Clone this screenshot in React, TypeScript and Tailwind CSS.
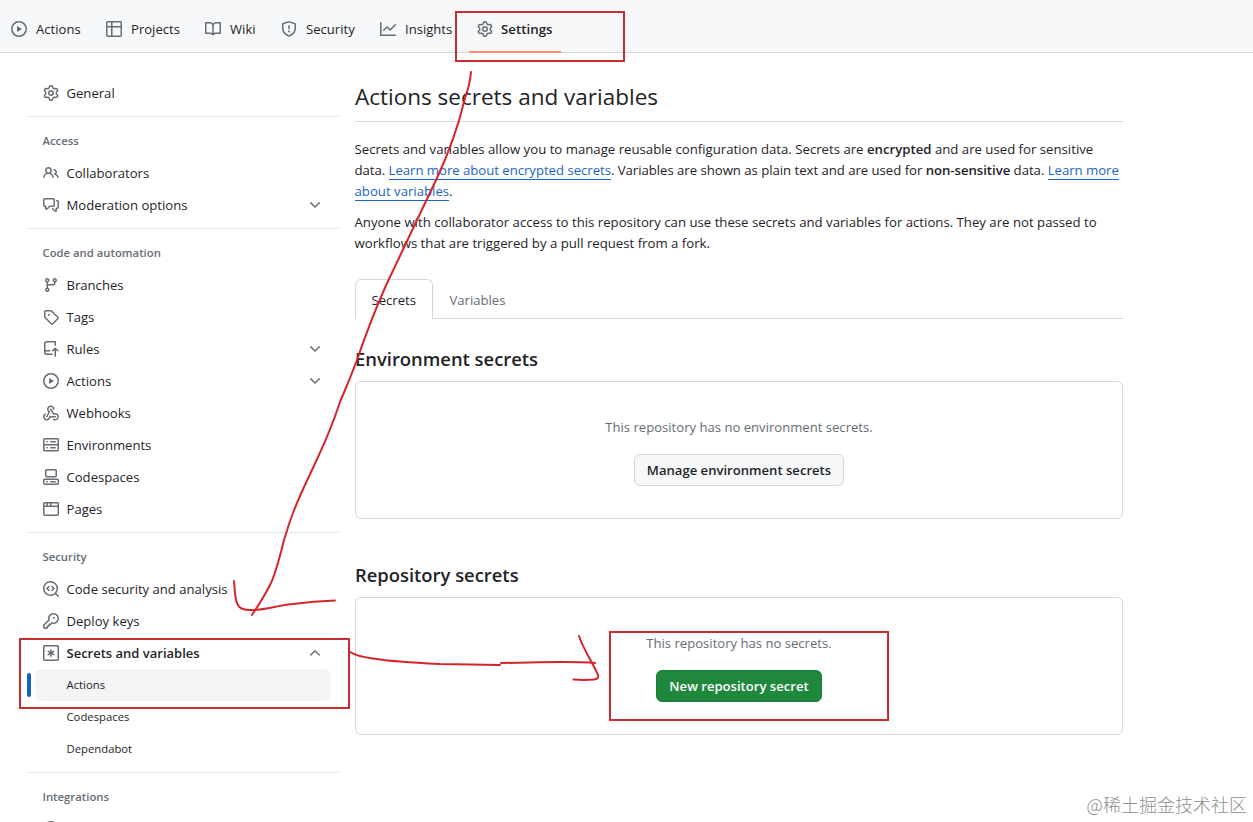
import type { ReactNode } from "react";

const icons = {
  play: "M8 0a8 8 0 1 1 0 16A8 8 0 0 1 8 0ZM1.5 8a6.5 6.5 0 1 0 13 0 6.5 6.5 0 0 0-13 0Zm4.879-2.773 4.264 2.559a.25.25 0 0 1 0 .428l-4.264 2.559A.25.25 0 0 1 6 10.559V5.442a.25.25 0 0 1 .379-.215Z",
  table: "M0 1.75C0 .784.784 0 1.75 0h12.5C15.216 0 16 .784 16 1.75v12.5A1.75 1.75 0 0 1 14.25 16H1.75A1.75 1.75 0 0 1 0 14.25ZM6.5 6.5v8h7.75a.25.25 0 0 0 .25-.25V6.5Zm8-1.5V1.75a.25.25 0 0 0-.25-.25H6.5V5Zm-13 1.5v7.75c0 .138.112.25.25.25H5v-8ZM5 5V1.5H1.75a.25.25 0 0 0-.25.25V5Z",
  book: "M0 1.75A.75.75 0 0 1 .75 1h4.253c1.227 0 2.317.59 3 1.501A3.743 3.743 0 0 1 11.006 1h4.245a.75.75 0 0 1 .75.75v10.5a.75.75 0 0 1-.75.75h-4.507a2.25 2.25 0 0 0-1.591.659l-.622.621a.75.75 0 0 1-1.06 0l-.622-.621A2.25 2.25 0 0 0 5.258 13H.75a.75.75 0 0 1-.75-.75Zm7.251 10.324.004-5.073-.002-2.253A2.25 2.25 0 0 0 5.003 2.5H1.5v9h3.757a3.75 3.75 0 0 1 1.994.574ZM8.755 4.75l-.004 7.322a3.752 3.752 0 0 1 1.992-.572H14.5v-9h-3.495a2.25 2.25 0 0 0-2.25 2.25Z",
  shield: "M7.467.133a1.748 1.748 0 0 1 1.066 0l5.25 1.68A1.75 1.75 0 0 1 15 3.48V7c0 1.566-.32 3.182-1.303 4.682-.983 1.498-2.585 2.813-5.032 3.855a1.697 1.697 0 0 1-1.33 0c-2.447-1.042-4.049-2.357-5.032-3.855C1.32 10.182 1 8.566 1 7V3.48a1.75 1.75 0 0 1 1.217-1.667Zm.61 1.429a.25.25 0 0 0-.153 0l-5.25 1.68a.25.25 0 0 0-.174.238V7c0 1.358.275 2.666 1.057 3.86.784 1.194 2.121 2.34 4.366 3.297a.196.196 0 0 0 .154 0c2.245-.956 3.582-2.104 4.366-3.298C13.225 9.666 13.5 8.36 13.5 7V3.48a.251.251 0 0 0-.174-.237l-5.25-1.68ZM8.75 4.75v3a.75.75 0 0 1-1.5 0v-3a.75.75 0 0 1 1.5 0ZM9 10.5a1 1 0 1 1-2 0 1 1 0 0 1 2 0Z",
  graph: "M1.5 1.75V13.5h13.75a.75.75 0 0 1 0 1.5H.75a.75.75 0 0 1-.75-.75V1.75a.75.75 0 0 1 1.5 0Zm14.28 2.53-5.25 5.25a.75.75 0 0 1-1.06 0L7 7.06 4.28 9.78a.751.751 0 0 1-1.042-.018.751.751 0 0 1-.018-1.042l3.25-3.25a.75.75 0 0 1 1.06 0L10 7.94l4.72-4.72a.751.751 0 0 1 1.042.018.751.751 0 0 1 .018 1.042Z",
  gear: "M8 0a8.2 8.2 0 0 1 .701.031C9.444.095 9.99.645 10.16 1.29l.288 1.107c.018.066.079.158.212.224.231.114.454.243.668.386.123.082.233.09.299.071l1.103-.303c.644-.176 1.392.021 1.82.63.27.385.506.792.704 1.218.315.675.111 1.422-.364 1.891l-.814.806c-.049.048-.098.147-.088.294.016.257.016.515 0 .772-.01.147.038.246.088.294l.814.806c.475.469.679 1.216.364 1.891a7.977 7.977 0 0 1-.704 1.217c-.428.61-1.176.807-1.82.63l-1.102-.302c-.067-.019-.177-.011-.3.071a5.909 5.909 0 0 1-.668.386c-.133.066-.194.158-.211.224l-.29 1.106c-.168.646-.715 1.196-1.458 1.26a8.006 8.006 0 0 1-1.402 0c-.743-.064-1.289-.614-1.458-1.26l-.289-1.106c-.018-.066-.079-.158-.212-.224a5.738 5.738 0 0 1-.668-.386c-.123-.082-.233-.09-.299-.071l-1.103.303c-.644.176-1.392-.021-1.82-.63a8.12 8.12 0 0 1-.704-1.218c-.315-.675-.111-1.422.363-1.891l.815-.806c.05-.048.098-.147.088-.294a6.214 6.214 0 0 1 0-.772c.01-.147-.038-.246-.088-.294l-.815-.806C.635 6.045.431 5.298.746 4.623a7.92 7.92 0 0 1 .704-1.217c.428-.61 1.176-.807 1.82-.63l1.102.302c.067.019.177.011.3-.071.214-.143.437-.272.668-.386.133-.066.194-.158.211-.224l.29-1.106C6.009.645 6.556.095 7.299.03 7.53.01 7.764 0 8 0Zm-.571 1.525c-.036.003-.108.036-.137.146l-.289 1.105c-.147.561-.549.967-.998 1.189-.173.086-.34.183-.5.29-.417.278-.97.423-1.529.27l-1.103-.303c-.109-.03-.175.016-.195.045-.22.312-.412.644-.573.99-.014.031-.021.11.059.19l.815.806c.411.406.562.957.53 1.456a4.709 4.709 0 0 0 0 .582c.032.499-.119 1.05-.53 1.456l-.815.806c-.081.08-.073.159-.059.19.162.346.353.677.573.989.02.03.085.076.195.046l1.102-.303c.56-.153 1.113-.008 1.53.27.161.107.328.204.501.29.447.222.85.629.997 1.189l.289 1.105c.029.109.101.143.137.146a6.6 6.6 0 0 0 1.142 0c.036-.003.108-.036.137-.146l.289-1.105c.147-.561.549-.967.998-1.189.173-.086.34-.183.5-.29.417-.278.97-.423 1.529-.27l1.103.303c.109.029.175-.016.195-.045.22-.313.411-.644.573-.99.014-.031.021-.11-.059-.19l-.815-.806c-.411-.406-.562-.957-.53-1.456a4.709 4.709 0 0 0 0-.582c-.032-.499.119-1.05.53-1.456l.815-.806c.081-.08.073-.159.059-.19a6.464 6.464 0 0 0-.573-.989c-.02-.03-.085-.076-.195-.046l-1.102.303c-.56.153-1.113.008-1.53-.27a4.44 4.44 0 0 0-.501-.29c-.447-.222-.85-.629-.997-1.189l-.289-1.105c-.029-.11-.101-.143-.137-.146a6.6 6.6 0 0 0-1.142 0ZM11 8a3 3 0 1 1-6 0 3 3 0 0 1 6 0ZM9.5 8a1.5 1.5 0 1 0-3.001.001A1.5 1.5 0 0 0 9.5 8Z",
  people: "M2 5.5a3.5 3.5 0 1 1 5.898 2.549 5.508 5.508 0 0 1 3.034 4.084.75.75 0 1 1-1.482.235 4 4 0 0 0-7.9 0 .75.75 0 0 1-1.482-.236A5.507 5.507 0 0 1 3.102 8.05 3.493 3.493 0 0 1 2 5.5ZM11 4a3.001 3.001 0 0 1 2.22 5.018 5.01 5.01 0 0 1 2.56 3.012.749.749 0 0 1-.885.954.752.752 0 0 1-.549-.514 3.507 3.507 0 0 0-2.522-2.372.75.75 0 0 1-.574-.73v-.352a.75.75 0 0 1 .416-.672A1.5 1.5 0 0 0 11 5.5.75.75 0 0 1 11 4Zm-5.5-.5a2 2 0 1 0-.001 3.999A2 2 0 0 0 5.5 3.5Z",
  discussion: "M1.75 1h8.5c.966 0 1.75.784 1.75 1.75v5.5A1.75 1.75 0 0 1 10.25 10H7.061l-2.574 2.573A1.458 1.458 0 0 1 2 11.543V10h-.25A1.75 1.75 0 0 1 0 8.25v-5.5C0 1.784.784 1 1.75 1ZM1.5 2.75v5.5c0 .138.112.25.25.25h1a.75.75 0 0 1 .75.75v2.19l2.72-2.72a.749.749 0 0 1 .53-.22h3.5a.25.25 0 0 0 .25-.25v-5.5a.25.25 0 0 0-.25-.25h-8.5a.25.25 0 0 0-.25.25Zm13 2a.25.25 0 0 0-.25-.25h-.5a.75.75 0 0 1 0-1.5h.5c.966 0 1.75.784 1.75 1.75v5.5A1.75 1.75 0 0 1 14.25 12H14v1.543a1.458 1.458 0 0 1-2.487 1.03L9.22 12.28a.749.749 0 0 1 .326-1.275.749.749 0 0 1 .734.215l2.22 2.22v-2.19a.75.75 0 0 1 .75-.75h1a.25.25 0 0 0 .25-.25Z",
  branch: "M9.5 3.25a2.25 2.25 0 1 1 3 2.122V6A2.5 2.5 0 0 1 10 8.5H6a1 1 0 0 0-1 1v1.128a2.251 2.251 0 1 1-1.5 0V5.372a2.25 2.25 0 1 1 1.5 0v1.836A2.493 2.493 0 0 1 6 7h4a1 1 0 0 0 1-1v-.628A2.25 2.25 0 0 1 9.5 3.25Zm-6 0a.75.75 0 1 0 1.5 0 .75.75 0 0 0-1.5 0Zm8.25-.75a.75.75 0 1 0 0 1.5.75.75 0 0 0 0-1.5ZM4.25 12a.75.75 0 1 0 0 1.5.75.75 0 0 0 0-1.5Z",
  tag: "M1 7.775V2.75C1 1.784 1.784 1 2.75 1h5.025c.464 0 .91.184 1.238.513l6.25 6.25a1.75 1.75 0 0 1 0 2.474l-5.026 5.026a1.75 1.75 0 0 1-2.474 0l-6.25-6.25A1.752 1.752 0 0 1 1 7.775Zm1.5 0c0 .066.026.13.073.177l6.25 6.25a.25.25 0 0 0 .354 0l5.025-5.025a.25.25 0 0 0 0-.354l-6.25-6.25a.25.25 0 0 0-.177-.073H2.75a.25.25 0 0 0-.25.25ZM6 5a1 1 0 1 1 0 2 1 1 0 0 1 0-2Z",
  push: "M1 2.5A2.5 2.5 0 0 1 3.5 0h8.75a.75.75 0 0 1 .75.75v3.5a.75.75 0 0 1-1.5 0V1.5h-8a1 1 0 0 0-1 1v6.708A2.493 2.493 0 0 1 3.5 9h3.25a.75.75 0 0 1 0 1.5H3.5a1 1 0 0 0 0 2h5.75a.75.75 0 0 1 0 1.5H3.5A2.5 2.5 0 0 1 1 11.5Zm13.23 7.79h-.001l-1.224-1.224v6.184a.75.75 0 0 1-1.5 0V9.066L10.28 10.29a.75.75 0 0 1-1.06-1.061l2.505-2.504a.75.75 0 0 1 1.06 0L15.29 9.23a.751.751 0 0 1-.018 1.042.751.751 0 0 1-1.042.018Z",
  webhook: "M5.5 4.25a2.25 2.25 0 0 1 4.5 0 .75.75 0 0 0 1.5 0 3.75 3.75 0 1 0-6.14 2.889l-2.272 4.258a.75.75 0 0 0 1.324.706L7 7.25a.75.75 0 0 0-.309-1.015A2.25 2.25 0 0 1 5.5 4.25ZM7.364 3.607a.75.75 0 0 1 1.03.257l2.608 4.349a3.75 3.75 0 1 1-.628 6.785.75.75 0 0 1 .752-1.299 2.25 2.25 0 1 0-.033-3.88.75.75 0 0 1-1.03-.256L7.107 4.636a.75.75 0 0 1 .257-1.03ZM2.9 8.776A.75.75 0 0 1 2.625 9.8 2.25 2.25 0 1 0 6 11.75a.75.75 0 0 1 .75-.751h5.5a.75.75 0 0 1 0 1.5H7.425a3.751 3.751 0 1 1-5.55-3.998.75.75 0 0 1 1.024.274Z",
  server: "M1.75 1h12.5c.966 0 1.75.784 1.75 1.75v4c0 .372-.116.717-.314 1 .198.283.314.628.314 1v4a1.75 1.75 0 0 1-1.75 1.75H1.75A1.75 1.75 0 0 1 0 12.75v-4c0-.358.109-.707.314-1a1.739 1.739 0 0 1-.314-1v-4C0 1.784.784 1 1.75 1ZM1.5 2.75v4c0 .138.112.25.25.25h12.5a.25.25 0 0 0 .25-.25v-4a.25.25 0 0 0-.25-.25H1.75a.25.25 0 0 0-.25.25Zm.25 5.75a.25.25 0 0 0-.25.25v4c0 .138.112.25.25.25h12.5a.25.25 0 0 0 .25-.25v-4a.25.25 0 0 0-.25-.25ZM7 4.75A.75.75 0 0 1 7.75 4h4.5a.75.75 0 0 1 0 1.5h-4.5A.75.75 0 0 1 7 4.75ZM7.75 10h4.5a.75.75 0 0 1 0 1.5h-4.5a.75.75 0 0 1 0-1.5ZM3 4.75A.75.75 0 0 1 3.75 4h.5a.75.75 0 0 1 0 1.5h-.5A.75.75 0 0 1 3 4.75ZM3.75 10h.5a.75.75 0 0 1 0 1.5h-.5a.75.75 0 0 1 0-1.5Z",
  codespaces: "M0 11.25c0-.966.784-1.75 1.75-1.75h12.5c.966 0 1.75.784 1.75 1.75v3A1.75 1.75 0 0 1 14.25 16H1.75A1.75 1.75 0 0 1 0 14.25Zm2-9.5C2 .784 2.784 0 3.75 0h8.5C13.216 0 14 .784 14 1.75v5a1.75 1.75 0 0 1-1.75 1.75h-8.5A1.75 1.75 0 0 1 2 6.75Zm1.75-.25a.25.25 0 0 0-.25.25v5c0 .138.112.25.25.25h8.5a.25.25 0 0 0 .25-.25v-5a.25.25 0 0 0-.25-.25Zm-2 9.5a.25.25 0 0 0-.25.25v3c0 .138.112.25.25.25h12.5a.25.25 0 0 0 .25-.25v-3a.25.25 0 0 0-.25-.25ZM7 12.75a.75.75 0 0 1 .75-.75h4.5a.75.75 0 0 1 0 1.5h-4.5a.75.75 0 0 1-.75-.75Zm-4 0a.75.75 0 0 1 .75-.75h.5a.75.75 0 0 1 0 1.5h-.5a.75.75 0 0 1-.75-.75Z",
  browser: "M0 2.75C0 1.784.784 1 1.75 1h12.5c.966 0 1.75.784 1.75 1.75v10.5A1.75 1.75 0 0 1 14.25 15H1.75A1.75 1.75 0 0 1 0 13.25ZM14.5 6h-13v7.25c0 .138.112.25.25.25h12.5a.25.25 0 0 0 .25-.25Zm-6-3.5v2h6V2.75a.25.25 0 0 0-.25-.25ZM5 2.5v2h2v-2Zm-3.25 0a.25.25 0 0 0-.25.25V4.5h2v-2Z",
  codescan: "M8.47 4.97a.75.75 0 0 0 0 1.06L9.94 7.5 8.47 8.97a.75.75 0 1 0 1.06 1.06l2-2a.75.75 0 0 0 0-1.06l-2-2a.75.75 0 0 0-1.06 0ZM6.53 6.03a.75.75 0 0 0-1.06-1.06l-2 2a.75.75 0 0 0 0 1.06l2 2a.75.75 0 1 0 1.06-1.06L5.06 7.5l1.47-1.47ZM12.246 13.307a7.501 7.501 0 1 1 1.06-1.06l2.474 2.473a.749.749 0 0 1-.326 1.275.749.749 0 0 1-.734-.215ZM1.5 7.5a6.002 6.002 0 0 0 3.608 5.504 6.002 6.002 0 0 0 6.486-1.117.748.748 0 0 1 .292-.293A6 6 0 1 0 1.5 7.5Z",
  key: "M10.5 0a5.499 5.499 0 1 1-1.288 10.848l-.932.932a.749.749 0 0 1-.53.22H7v.75a.749.749 0 0 1-.22.53l-.5.5a.749.749 0 0 1-.53.22H5v.75a.749.749 0 0 1-.22.53l-.5.5a.749.749 0 0 1-.53.22h-2A1.75 1.75 0 0 1 0 14.25v-2c0-.199.079-.389.22-.53l4.932-4.932A5.5 5.5 0 0 1 10.5 0Zm-4 5.5c-.001.431.069.86.205 1.269a.75.75 0 0 1-.181.768L1.5 12.56v1.69c0 .138.112.25.25.25h1.69l.06-.06v-1.19a.75.75 0 0 1 .75-.75h1.19l.06-.06v-1.19a.75.75 0 0 1 .75-.75h1.19l1.023-1.025a.75.75 0 0 1 .768-.18A4 4 0 1 0 6.5 5.5ZM11 6a1 1 0 1 1 0-2 1 1 0 0 1 0 2Z",
  asterisk: "M1.75 0h12.5C15.216 0 16 .784 16 1.75v12.5A1.75 1.75 0 0 1 14.25 16H1.75A1.75 1.75 0 0 1 0 14.25V1.75C0 .784.784 0 1.75 0ZM1.5 1.75v12.5c0 .138.112.25.25.25h12.5a.25.25 0 0 0 .25-.25V1.75a.25.25 0 0 0-.25-.25H1.75a.25.25 0 0 0-.25.25ZM8 4a.75.75 0 0 1 .75.75V6.7l1.69-.975a.75.75 0 0 1 .75 1.3L9.5 8l1.69.976a.75.75 0 0 1-.75 1.298L8.75 9.3v1.951a.75.75 0 0 1-1.5 0V9.299l-1.69.976a.75.75 0 0 1-.75-1.3L6.5 8l-1.69-.975a.75.75 0 0 1 .75-1.3l1.69.976V4.75A.75.75 0 0 1 8 4Z",
  down: "M12.78 5.22a.749.749 0 0 1 0 1.06l-4.25 4.25a.749.749 0 0 1-1.06 0L3.22 6.28a.749.749 0 1 1 1.06-1.06L8 8.939l3.72-3.719a.749.749 0 0 1 1.06 0Z",
  up: "M3.22 10.53a.749.749 0 0 1 0-1.06l4.25-4.25a.749.749 0 0 1 1.06 0l4.25 4.25a.749.749 0 1 1-1.06 1.06L8 6.811 4.28 10.53a.749.749 0 0 1-1.06 0Z",
};

type IconName = keyof typeof icons;

function Icon({ name }: { name: IconName }) {
  return (
    <svg viewBox="0 0 16 16" className="w-4 h-4 shrink-0 fill-[#656d76]">
      <path d={icons[name]} />
    </svg>
  );
}

const tabs: { icon: IconName; label: string; width: string }[] = [
  { icon: "play", label: "Actions", width: "w-[95px]" },
  { icon: "table", label: "Projects", width: "w-[99px]" },
  { icon: "book", label: "Wiki", width: "w-[76px]" },
  { icon: "shield", label: "Security", width: "w-[99px]" },
  { icon: "graph", label: "Insights", width: "w-[89px]" },
];

function TopNav() {
  return (
    <nav className="flex h-[53px] pl-[11px] bg-[#f6f8fa] border-b border-[#d0d7de]">
      {tabs.map((t) => (
        <div key={t.label} className={`flex items-center gap-[9px] pt-[6px] h-[52px] shrink-0 ${t.width}`}>
          <Icon name={t.icon} />
          <span className="pt-[2px]">{t.label}</span>
        </div>
      ))}
      <div className="flex w-[92px] h-[53px] pl-2 pt-[7px] items-center gap-2 border-b-2 border-[#fd8c73] font-semibold text-[13.3px]">
        <Icon name="gear" />
        <span className="pt-[2px]">Settings</span>
      </div>
    </nav>
  );
}

function Item({ icon, label, chevron, bold }: { icon: IconName; label?: string; chevron?: "up" | "down"; bold?: boolean }) {
  return (
    <li className="flex items-center h-8 pl-[15px] pr-4">
      <Icon name={icon} />
      {label && <span className={bold ? "ml-[7.5px] pt-[2px] text-[13px] font-semibold" : "ml-[7.5px] pt-[2px]"}>{label}</span>}
      {chevron && (
        <span className="ml-auto">
          <Icon name={chevron} />
        </span>
      )}
    </li>
  );
}

function Group({ title, children }: { title?: string; children: ReactNode }) {
  return (
    <section className="border-b border-[#e2e6ea] pb-[7px] mb-2">
      {title && <h3 className="h-8 pl-[14.5px] leading-8 text-[11.3px] font-semibold text-[#656d76]">{title}</h3>}
      <ul>{children}</ul>
    </section>
  );
}

function Sidebar() {
  return (
    <aside className="w-[311px] shrink-0 ml-7 pt-6">
      <Group>
        <Item icon="gear" label="General" />
      </Group>
      <Group title="Access">
        <Item icon="people" label="Collaborators" />
        <Item icon="discussion" label="Moderation options" chevron="down" />
      </Group>
      <Group title="Code and automation">
        <Item icon="branch" label="Branches" />
        <Item icon="tag" label="Tags" />
        <Item icon="push" label="Rules" chevron="down" />
        <Item icon="play" label="Actions" chevron="down" />
        <Item icon="webhook" label="Webhooks" />
        <Item icon="server" label="Environments" />
        <Item icon="codespaces" label="Codespaces" />
        <Item icon="browser" label="Pages" />
      </Group>
      <Group title="Security">
        <Item icon="codescan" label="Code security and analysis" />
        <Item icon="key" label="Deploy keys" />
        <Item icon="asterisk" label="Secrets and variables" chevron="up" bold />
        <li className="flex items-center -ml-px gap-1 h-8 text-[11.3px]">
          <span className="w-1 h-6 rounded-md bg-[#1264c4]" />
          <span className="flex items-center w-[296px] h-8 pl-[31.5px] rounded-md bg-[#f3f4f6]">Actions</span>
        </li>
        <li className="h-8 pl-[38.5px] leading-8 text-[11.3px]">Codespaces</li>
        <li className="h-8 pl-[38.5px] leading-8 text-[11.3px]">Dependabot</li>
      </Group>
      <Group title="Integrations">
        <Item icon="play" />
      </Group>
    </aside>
  );
}

function Link({ children }: { children: ReactNode }) {
  return <a className="text-[#1a66c2] border-b border-[#1a66c2]">{children}</a>;
}

function SecretsBox({ title, text, children }: { title: string; text: string; children: ReactNode }) {
  return (
    <section>
      <h2 className="h-[37px] leading-[30px] text-[18.4px] font-semibold">{title}</h2>
      <div className="flex flex-col items-center h-[138px] pt-[35px] border border-[#d3d8dc] rounded-md">
        <p className="leading-[21px] mb-4 text-[#656d76]">{text}</p>
        {children}
      </div>
    </section>
  );
}

function Content() {
  return (
    <main className="w-[768px] ml-4 pt-6 shrink-0 whitespace-nowrap">
      <h1 className="h-[45px] mb-[17px] border-b border-[#d3d8dc] text-[22.5px] leading-[40px]">Actions secrets and variables</h1>
      <p className="-ml-[0.5px] leading-[21px] mb-[10px] text-[13.2px]">
        Secrets and variables allow you to manage reusable configuration data. Secrets are <b className="font-semibold">encrypted</b> and are used for sensitive
        <br />
        <span className="tracking-[-0.04px]">
          data. <Link>Learn more about encrypted secrets</Link>. Variables are shown as plain text and are used for{" "}
          <b className="font-semibold">non-sensitive</b> data. <Link>Learn more</Link>
        </span>
        <br />
        <Link>about variables</Link>.
      </p>
      <p className="-ml-[0.5px] leading-[21px] text-[13.2px]">
        Anyone with collaborator access to this repository can use these secrets and variables for actions. They are not passed to
        <br />
        workflows that are triggered by a pull request from a fork.
      </p>
      <div className="flex h-10 mt-[25px] mb-[25px] leading-[41px]">
        <span className="w-[78px] pl-[15.5px] border border-b-0 border-[#d3d8dc] rounded-t-md">Secrets</span>
        <span className="grow pl-[16.5px] pt-px border-b border-[#d3d8dc] text-[#656d76]">Variables</span>
      </div>
      <SecretsBox title="Environment secrets" text="This repository has no environment secrets.">
        <button className="w-[210px] h-8 pt-[2px] rounded-md border border-[#d3d8dc] bg-[#f6f8fa] font-semibold">Manage environment secrets</button>
      </SecretsBox>
      <div className="h-[41px]" />
      <SecretsBox title="Repository secrets" text="This repository has no secrets.">
        <button className="w-[166px] h-8 pt-[2px] rounded-md border border-[#1c7c37] bg-[#1f883d] text-white font-semibold">New repository secret</button>
      </SecretsBox>
    </main>
  );
}

// red pen marks drawn over the page
function Marks() {
  return (
    <svg viewBox="0 0 1253 822" className="absolute inset-0 w-full h-full fill-none stroke-[#d3252b] stroke-2" strokeLinecap="round" strokeLinejoin="round">
      <g strokeLinejoin="miter" className="stroke-[#c92c31]">
        <rect x="456" y="12" width="168" height="49" />
        <rect x="20" y="639" width="329" height="69" />
        <rect x="610" y="632" width="278" height="88" />
      </g>
      <path d="M471 72C470 84 468 90 465 98C458 128 450 150 437 178L389 279C375 309 366 334 357 360C348 384 344 392 340 402C334 420 327 438 318 457C309 477 300 494 293 513C289 523 287 531 284 540C280 556 276 573 270 585C264 597 258 606 252 615" />
      <path d="M234 581C235 592 235 599 237 603C239 609 243 610 253 610C266 610 279 605 293 604C308 602 321 601 335 600.5" />
      <path d="M350 652C356 656 363 657 373 658.5C395 662 418 663 440 664L500 665M501 663C540 662.5 570 661 595 663" />
      <path d="M579 636C585 653 593 663 598 675C599 678 597 679 594 679.5C587 680 580 680 573.5 679.5" />
    </svg>
  );
}

export default function App() {
  return (
    <div className="relative w-[1253px] h-[822px] overflow-hidden bg-white text-[#1f2328] text-[13.1px] font-['Open_Sans','Noto_Sans',sans-serif]">
      <TopNav />
      <div className="flex">
        <Sidebar />
        <Content />
      </div>
      <Marks />
      <span className="absolute right-[6px] bottom-[6px] leading-6 text-[18px] font-light text-[#8f8f8f] font-['Noto_Sans_CJK_SC',sans-serif]">@稀土掘金技术社区</span>
    </div>
  );
}
